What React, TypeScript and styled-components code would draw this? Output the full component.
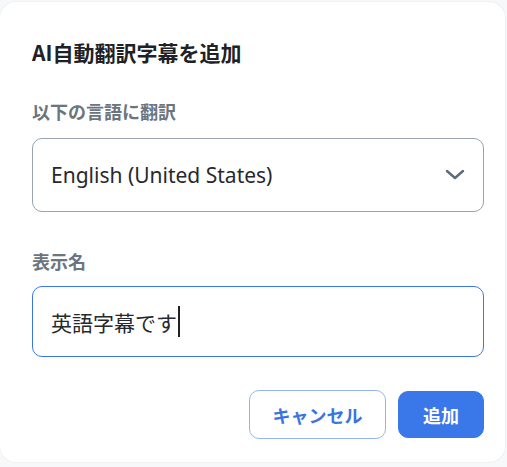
import React from "react";
import styled, { createGlobalStyle } from "styled-components";

const Global = createGlobalStyle`
  html, body { margin: 0; padding: 0; background: #f7f8f9; }
  body { font-family: "Noto Sans", "Noto Sans CJK JP", sans-serif; }
`;

const Page = styled.div`
  width: 507px;
  height: 467px;
  padding-top: 2px;
  box-sizing: border-box;
  overflow: hidden;
`;

const Card = styled.div`
  width: 505px;
  height: 460px;
  box-sizing: border-box;
  background: #ffffff;
  border-radius: 16px;
  box-shadow: 0 0 0 1px #eef0f2;
  padding: 36px 21px 0 32px;
  display: flex;
  flex-direction: column;
`;

const Title = styled.h2`
  margin: 0;
  font-family: "Noto Sans CJK JP", sans-serif;
  font-size: 21px;
  font-weight: 700;
  line-height: 28px;
  color: #202124;
`;

const Label = styled.label<{ $top: number }>`
  margin-top: ${(p) => p.$top}px;
  font-family: "Noto Sans CJK JP", sans-serif;
  font-size: 18px;
  font-weight: 700;
  line-height: 24px;
  color: #6b7580;
`;

const Field = styled.div<{ $focused?: boolean; $h: number; $top: number }>`
  margin-top: ${(p) => p.$top}px;
  height: ${(p) => p.$h}px;
  box-sizing: border-box;
  border: 1px solid ${(p) => (p.$focused ? "#3b78e7" : "#9aa2ad")};
  border-radius: 10px;
  display: flex;
  align-items: center;
  justify-content: space-between;
  padding: 0 18px 0 18px;
  color: #202124;
`;

const SelectText = styled.span`
  font-family: "Noto Sans", sans-serif;
  font-size: 21px;
  color: #26292e;
`;

const InputText = styled.span`
  font-family: "Noto Sans CJK JP", sans-serif;
  font-size: 21px;
  color: #26292e;
  display: flex;
  align-items: center;
`;

const Caret = styled.span`
  display: inline-block;
  width: 2px;
  height: 31px;
  background: #202124;
  margin-left: 1px;
`;

const Actions = styled.div`
  margin-top: 33px;
  display: flex;
  justify-content: flex-end;
  gap: 12px;
  align-items: center;
`;

const Button = styled.button<{ $primary?: boolean }>`
  font-family: "Noto Sans CJK JP", sans-serif;
  font-size: 18px;
  font-weight: 700;
  height: ${(p) => (p.$primary ? 47 : 49)}px;
  padding: 0 ${(p) => (p.$primary ? 24 : 22.5)}px;
  border-radius: 10px;
  border: 1px solid ${(p) => (p.$primary ? "#3a78ea" : "#93b6f3")};
  background: ${(p) => (p.$primary ? "#3a78ea" : "#ffffff")};
  color: ${(p) => (p.$primary ? "#ffffff" : "#3a75df")};
  cursor: pointer;
  box-sizing: border-box;
`;

export default function App() {
  return (
    <Page>
      <Global />
      <Card>
        <Title>AI自動翻訳字幕を追加</Title>
        <Label $top={33}>以下の言語に翻訳</Label>
        <Field $h={74} $top={15}>
          <SelectText>English (United States)</SelectText>
          <svg width="20" height="12" viewBox="0 0 20 12">
            <path d="M2 2 L10 9 L18 2" fill="none" stroke="#5f6b78" strokeWidth="2.4" strokeLinecap="round" strokeLinejoin="round" />
          </svg>
        </Field>
        <Label $top={37}>表示名</Label>
        <Field $focused $h={71} $top={13}>
          <InputText>
            英語字幕です
            <Caret />
          </InputText>
        </Field>
        <Actions>
          <Button>キャンセル</Button>
          <Button $primary>追加</Button>
        </Actions>
      </Card>
    </Page>
  );
}
